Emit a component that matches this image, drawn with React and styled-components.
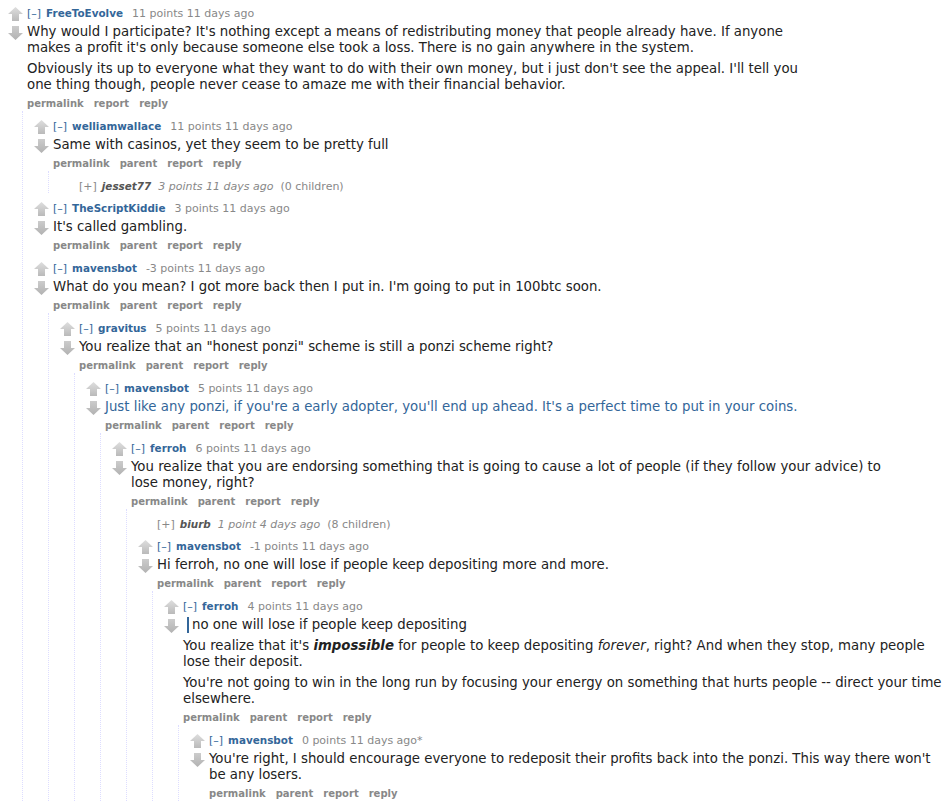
import React from "react";
import styled, { createGlobalStyle } from "styled-components";

const GlobalStyle = createGlobalStyle`
  body {
    margin: 0;
    background: #fff;
    color: #222;
    font-family: "DejaVu Sans", Verdana, sans-serif;
  }
  * {
    box-sizing: border-box;
  }
`;

const Page = styled.div`
  padding: 6px 0 0 8px;
`;

const CommentBox = styled.div`
  & + & {
    margin-top: 8px;
  }
`;

const Row = styled.div`
  display: flex;
  align-items: flex-start;
`;

const Midcol = styled.div`
  flex: 0 0 15px;
  margin-right: 4px;
  padding-top: 1px;
  display: flex;
  flex-direction: column;
  gap: 5px;
`;

const Entry = styled.div`
  flex: 1;
  min-width: 0;
`;

const Tagline = styled.p`
  margin: 0;
  height: 14px;
  font-size: 11px;
  line-height: 14px;
  color: #888;
  white-space: nowrap;
`;

const Expand = styled.span`
  color: ${(p) => (p.$collapsed ? "#888" : "#369")};
  margin-right: 5px;
`;

const Author = styled.span`
  color: ${(p) => (p.$collapsed ? "#555" : "#369")};
  font-size: 10.4px;
  line-height: 14px;
  font-weight: bold;
  font-style: ${(p) => (p.$collapsed ? "italic" : "normal")};
  margin-right: ${(p) => (p.$collapsed ? 7 : 9)}px;
`;

const Score = styled.span`
  font-style: ${(p) => (p.$collapsed ? "italic" : "normal")};
`;

const ChildCount = styled.span`
  margin-left: 7px;
`;

const Body = styled.div`
  max-width: 780px;
  font-size: 13.3px;
  line-height: 16px;
  color: ${(p) => (p.$tint ? "#369" : "#222")};
  margin-top: 4px;

  p {
    margin: 0;
  }
  p + p,
  blockquote + p {
    margin-top: 5px;
  }
`;

const Quote = styled.blockquote`
  margin: 0 0 0 4px;
  padding-left: 3px;
  border-left: 2px solid #369;
`;

const Buttons = styled.ul`
  list-style: none;
  margin: 4px 0 0;
  padding: 0;
  height: 14px;
  display: flex;
  gap: 10px;
  font-size: 10px;
  line-height: 14px;
  font-weight: bold;
  color: #888;
`;

const Children = styled.div`
  margin-left: 14px;
  border-left: 1px dotted #ddf;
  padding: 8px 0 0 11px;
`;

function Arrow({ down }) {
  const id = down ? "gdown" : "gup";
  return (
    <svg width="15" height="14" viewBox="0 0 15 14">
      <defs>
        <linearGradient id={id} x1="0" y1="0" x2="0" y2="1">
          <stop offset="0" stopColor={down ? "#cccccc" : "#dedede"} />
          <stop offset="1" stopColor={down ? "#b2b2b2" : "#bababa"} />
        </linearGradient>
      </defs>
      <path
        d={
          down
            ? "M7.5 14 L15 7 L11 7 L11 0 L4 0 L4 7 L0 7 Z"
            : "M7.5 0 L15 7 L11 7 L11 14 L4 14 L4 7 L0 7 Z"
        }
        fill={`url(#${id})`}
      />
    </svg>
  );
}

const thread = [
  {
    author: "FreeToEvolve",
    score: "11 points 11 days ago",
    buttons: ["permalink", "report", "reply"],
    body: (
      <>
        <p>
          Why would I participate? It's nothing except a means of redistributing money that people
          already have. If anyone makes a profit it's only because someone else took a loss. There is
          no gain anywhere in the system.
        </p>
        <p>
          Obviously its up to everyone what they want to do with their own money, but i just don't see
          the appeal. I'll tell you one thing though, people never cease to amaze me with their
          financial behavior.
        </p>
      </>
    ),
    children: [
      {
        author: "welliamwallace",
        score: "11 points 11 days ago",
        body: <p>Same with casinos, yet they seem to be pretty full</p>,
        children: [
          {
            collapsed: true,
            author: "jesset77",
            score: "3 points 11 days ago",
            count: "(0 children)",
          },
        ],
      },
      {
        author: "TheScriptKiddie",
        score: "3 points 11 days ago",
        body: <p>It's called gambling.</p>,
      },
      {
        author: "mavensbot",
        score: "-3 points 11 days ago",
        body: (
          <p>What do you mean? I got more back then I put in. I'm going to put in 100btc soon.</p>
        ),
        children: [
          {
            author: "gravitus",
            score: "5 points 11 days ago",
            body: <p>You realize that an "honest ponzi" scheme is still a ponzi scheme right?</p>,
            children: [
              {
                author: "mavensbot",
                score: "5 points 11 days ago",
                tint: true,
                body: (
                  <p>
                    Just like any ponzi, if you're a early adopter, you'll end up ahead. It's a
                    perfect time to put in your coins.
                  </p>
                ),
                children: [
                  {
                    author: "ferroh",
                    score: "6 points 11 days ago",
                    body: (
                      <p>
                        You realize that you are endorsing something that is going to cause a lot of
                        people (if they follow your advice) to lose money, right?
                      </p>
                    ),
                    children: [
                      {
                        collapsed: true,
                        author: "biurb",
                        score: "1 point 4 days ago",
                        count: "(8 children)",
                      },
                      {
                        author: "mavensbot",
                        score: "-1 points 11 days ago",
                        body: (
                          <p>
                            Hi ferroh, no one will lose if people keep depositing more and more.
                          </p>
                        ),
                        children: [
                          {
                            author: "ferroh",
                            score: "4 points 11 days ago",
                            body: (
                              <>
                                <Quote>
                                  <p>no one will lose if people keep depositing</p>
                                </Quote>
                                <p>
                                  You realize that it's{" "}
                                  <strong>
                                    <em>impossible</em>
                                  </strong>{" "}
                                  for people to keep depositing <em>forever</em>, right? And when
                                  they stop, many people lose their deposit.
                                </p>
                                <p>
                                  You're not going to win in the long run by focusing your energy on
                                  something that hurts people -- direct your time elsewhere.
                                </p>
                              </>
                            ),
                            children: [
                              {
                                author: "mavensbot",
                                score: "0 points 11 days ago*",
                                body: (
                                  <p>
                                    You're right, I should encourage everyone to redeposit their
                                    profits back into the ponzi. This way there won't be any losers.
                                  </p>
                                ),
                              },
                            ],
                          },
                        ],
                      },
                    ],
                  },
                ],
              },
            ],
          },
        ],
      },
    ],
  },
];

function Comment({ c }) {
  if (c.collapsed) {
    return (
      <CommentBox>
        <Row>
          <Midcol />
          <Entry>
            <Tagline>
              <Expand $collapsed>[+]</Expand>
              <Author $collapsed>{c.author}</Author>
              <Score $collapsed>{c.score}</Score>
              <ChildCount>{c.count}</ChildCount>
            </Tagline>
          </Entry>
        </Row>
      </CommentBox>
    );
  }
  const buttons = c.buttons || ["permalink", "parent", "report", "reply"];
  return (
    <CommentBox>
      <Row>
        <Midcol>
          <Arrow />
          <Arrow down />
        </Midcol>
        <Entry>
          <Tagline>
            <Expand>[–]</Expand>
            <Author>{c.author}</Author>
            <Score>{c.score}</Score>
          </Tagline>
          <Body $tint={c.tint}>{c.body}</Body>
          <Buttons>
            {buttons.map((b) => (
              <li key={b}>{b}</li>
            ))}
          </Buttons>
        </Entry>
      </Row>
      {c.children && (
        <Children>
          {c.children.map((k, i) => (
            <Comment key={i} c={k} />
          ))}
        </Children>
      )}
    </CommentBox>
  );
}

export default function App() {
  return (
    <>
      <GlobalStyle />
      <Page>
        {thread.map((c, i) => (
          <Comment key={i} c={c} />
        ))}
      </Page>
    </>
  );
}
